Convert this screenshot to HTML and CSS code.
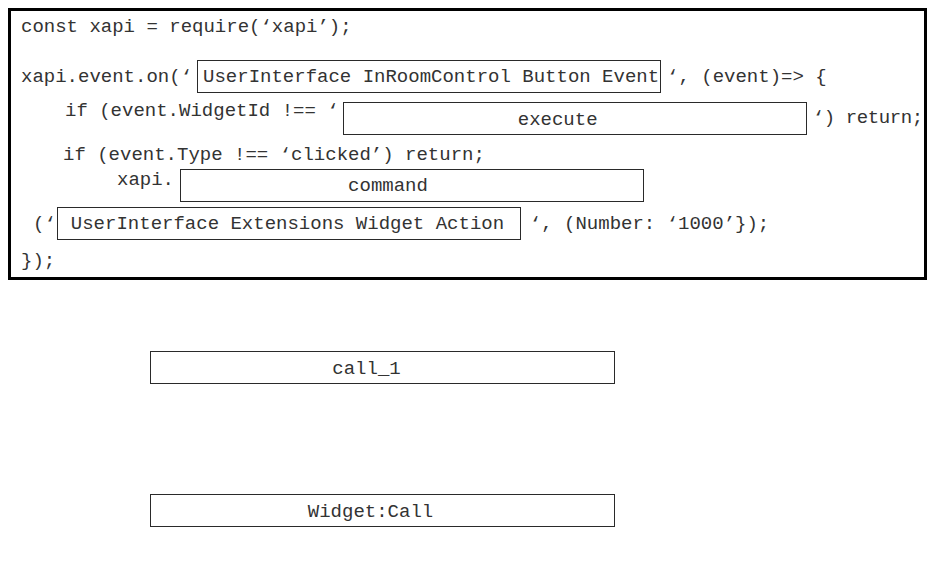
FILE: index.html
```html
<!DOCTYPE html>
<html>
<head>
<meta charset="utf-8">
<link rel="stylesheet" href="styles.css">
</head>
<body>
<div class="code">
  <div class="row r1"><span class="t">const xapi = require(‘xapi’);</span></div>
  <div class="row r2">
    <span class="t">xapi.event.on(‘</span>
    <div class="slot left g2">UserInterface InRoomControl Button Event</div>
    <span class="t post2">‘, (event)=&gt; {</span>
  </div>
  <div class="row r3">
    <span class="t pre3">if (event.WidgetId !== ‘</span>
    <div class="slot center g3">execute</div>
    <span class="t post3">‘) return;</span>
  </div>
  <div class="row r4"><span class="t">if (event.Type !== ‘clicked’) return;</span></div>
  <div class="row r5">
    <span class="t pre5">xapi.</span>
    <div class="slot center g5">command</div>
  </div>
  <div class="row r6">
    <span class="t">(‘</span>
    <div class="slot left6 g6">UserInterface Extensions Widget Action</div>
    <span class="t post6">‘, (Number: ‘1000’});</span>
  </div>
  <div class="row r7"><span class="t">});</span></div>
</div>
<div class="answers">
  <div class="slot center answer a1">call_1</div>
  <div class="slot center answer a2">Widget:Call</div>
</div>
</body>
</html>
```
FILE: styles.css
```css
html, body {
  background: #ffffff;
}
body {
  margin: 8px;
  font-family: "Liberation Mono", "Courier New", monospace;
  font-size: 19px;
  color: #333333;
}
.code {
  width: 919px;
  height: 272px;
  box-sizing: border-box;
  border: 3px solid #000000;
  padding: 0 0 6px 10px;
  display: flex;
  flex-direction: column;
}
.row {
  display: flex;
  align-items: center;
  white-space: pre;
}
.row > * {
  flex-shrink: 0;
}
.t {
  line-height: 20px;
  height: 20px;
  white-space: pre;
}
.slot {
  box-sizing: border-box;
  width: 464px;
  height: 33px;
  border: 1px solid #2a2a2a;
  line-height: 20px;
  display: flex;
  align-items: center;
  white-space: pre;
  flex-shrink: 0;
}
.slot.center {
  justify-content: center;
}
.slot.left {
  padding-left: 5px;
}
.slot.left6 {
  padding-left: 13px;
}
.r1 { margin-top: 6px; }
.r2 { margin-top: 23px; }
.g2 { margin-left: 5px; }
.post2 { margin-left: 6px; }
.r3 { margin-top: 9px; align-items: flex-start; padding-left: 44px; }
.pre3 { margin-top: -1px; }
.g3 { margin-left: 4px; padding-top: 3px; padding-right: 34px; }
.post3 { margin-left: 6px; margin-top: 6px; letter-spacing: -0.4px; }
.r4 { margin-top: 10px; padding-left: 42px; }
.r5 { margin-top: 4px; align-items: flex-start; padding-left: 96px; }
.pre5 { margin-top: 1px; }
.g5 { margin-left: 6px; padding-right: 48px; }
.r6 { margin-top: 5px; padding-left: 12px; }
.g6 { margin-left: 1px; }
.post6 { margin-left: 9px; }
.r7 { margin-top: 11px; }
.answers {
  display: flex;
  flex-direction: column;
  padding-left: 142px;
}
.answer {
  width: 465px;
  padding-top: 2px;
}
.a1 { margin-top: 71px; padding-right: 32px; }
.a2 { margin-top: 110px; padding-right: 24px; }
```
